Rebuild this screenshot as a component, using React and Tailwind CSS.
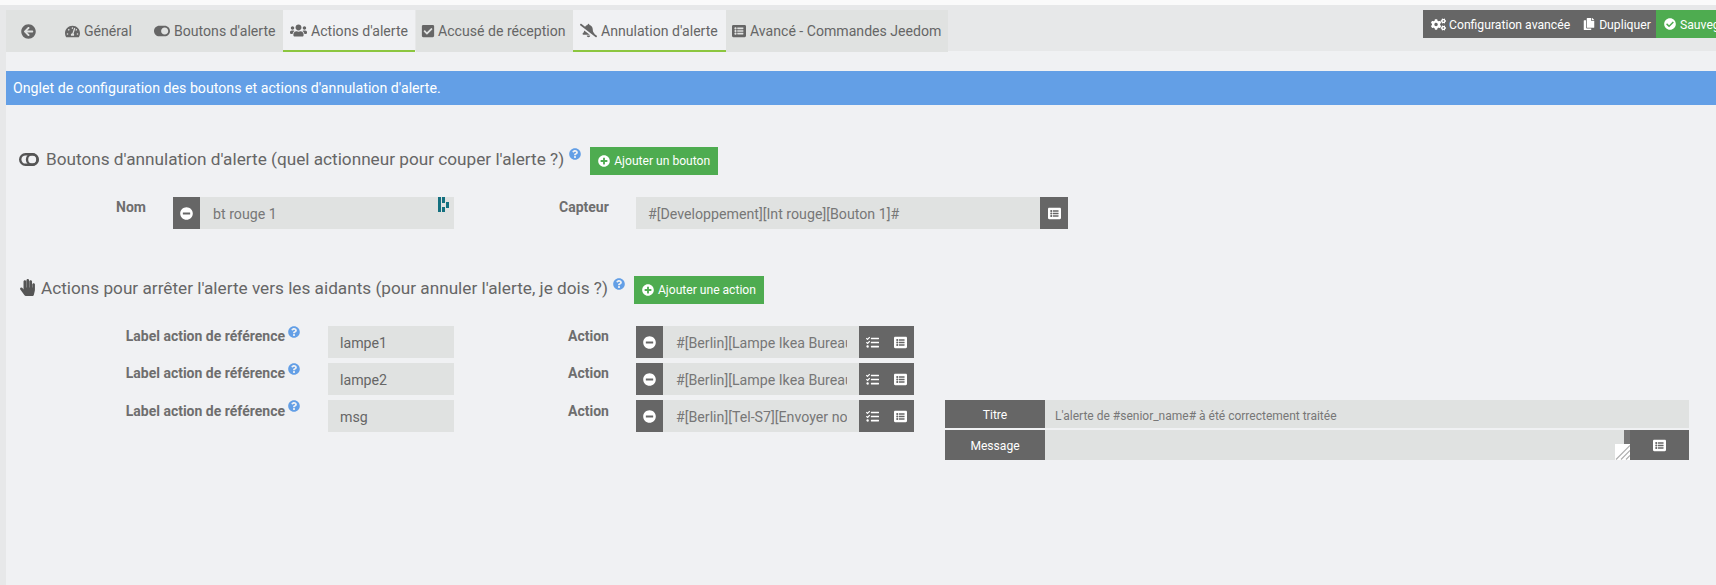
import React from "react";
import {
  FaArrowCircleLeft, FaTachometerAlt, FaToggleOn, FaUsers, FaCheckSquare, FaBellSlash, FaListAlt, FaCogs, FaCopy,
  FaCheckCircle, FaPlusCircle, FaMinusCircle, FaQuestionCircle, FaHandPaper, FaTasks,
} from "react-icons/fa";

function Tab({ icon: Icon, label, active, w, pl, gap, size = 15 }) {
  return (
    <div
      className={
        "flex h-[42px] shrink-0 items-center text-[14.1px] text-[#666] " +
        (active ? "bg-[#f0f1f3] border-b-2 border-[#8cc63f]" : "bg-[#e0e2e1]")
      }
      style={{ width: w, paddingLeft: pl, gap }}
    >
      <Icon size={size} className="shrink-0" />
      {label && <span className={"whitespace-nowrap " + (active ? "pt-[4px]" : "pt-[2px]")}>{label}</span>}
    </div>
  );
}

function Help({ className = "" }) {
  return <FaQuestionCircle size={12} className={"shrink-0 text-[#639fe6] " + className} />;
}

function AddBtn({ label, w }) {
  return (
    <div className="flex h-7 shrink-0 items-center justify-center gap-[4px] bg-[#4eac50] text-[12.1px] text-white" style={{ width: w }}>
      <FaPlusCircle size={12} />
      <span className="whitespace-nowrap pt-[1px]">{label}</span>
    </div>
  );
}

function Field({ value, w, pl = 12, color = "text-[#777]" }) {
  return (
    <div
      className={"flex h-8 items-center overflow-hidden whitespace-nowrap bg-[#e0e2e1] pt-[3px] text-[14.2px] " + color}
      style={{ width: w, paddingLeft: pl }}
    >
      {value}
    </div>
  );
}

function DarkCell({ w, h = 32, children, className = "" }) {
  return (
    <div className={"flex shrink-0 items-center justify-center bg-[#666] text-white " + className} style={{ width: w, height: h }}>
      {children}
    </div>
  );
}

function ActionRow({ label, value, right, labelPad = "" }) {
  return (
    <div className="flex items-start">
      <div className="flex w-[322px] shrink-0 justify-end pr-[28px] text-[14px] font-bold text-[#6e6e6e]">
        <div className="flex items-start gap-[3px]">
          <span className={"whitespace-nowrap " + labelPad}>Label action de référence</span>
          <Help />
        </div>
      </div>
      <Field value={label} w={126} color="text-[#666]" />
      <div className="w-[182px] shrink-0 pl-[114px] text-[14px] font-bold text-[#6e6e6e]">
        <span className={"block " + labelPad}>Action</span>
      </div>
      <DarkCell w={27}><FaMinusCircle size={13} /></DarkCell>
      <div className="flex h-8 w-[196px] items-center bg-[#e0e2e1] pl-[13px] pr-[12px] pt-[3px] text-[14.2px] text-[#777]">
        <span className="block overflow-hidden whitespace-nowrap">{value}</span>
      </div>
      <DarkCell w={55} className="gap-[15px]">
        <FaTasks size={13} />
        <FaListAlt size={13} />
      </DarkCell>
      {right}
    </div>
  );
}

export default function App() {
  return (
    <div className="h-[585px] overflow-hidden bg-[#fafafa] pt-[5px] text-[#666] [font-family:Roboto,sans-serif]">
      <div className="h-[580px] bg-[#e7e8e9] pl-[6px]">
        <div className="flex h-[46px] items-start justify-between pt-[5px]">
          <div className="relative z-10 flex">
            <Tab icon={FaArrowCircleLeft} w={55} pl={15} />
            <Tab icon={FaTachometerAlt} label="Général" w={84} pl={4} gap={4} />
            <Tab icon={FaToggleOn} label="Boutons d'alerte" w={138} pl={9} gap={4} size={16} />
            <Tab icon={FaUsers} label="Actions d'alerte" active w={132} pl={7} gap={4} size={17} />
            <div className="w-px" />
            <Tab icon={FaCheckSquare} label="Accusé de réception" w={157} pl={5} gap={3} size={14} />
            <Tab icon={FaBellSlash} label="Annulation d'alerte" active w={153} pl={7} gap={4} size={17} />
            <Tab icon={FaListAlt} label="Avancé - Commandes Jeedom" w={222} pl={6} gap={4} size={14} />
          </div>
          <div className="flex h-7 w-[293px] shrink-0 overflow-hidden text-[12.2px] text-white">
            <div className="flex w-[233px] shrink-0 items-center bg-[#666] pl-[8px]">
              <FaCogs size={15} className="mr-[3px]" />
              <span className="whitespace-nowrap pt-[3px]">Configuration avancée</span>
              <FaCopy size={12} className="ml-[13px] mr-[4px]" />
              <span className="pt-[3px]">Dupliquer</span>
            </div>
            <div className="flex w-[120px] shrink-0 items-center gap-[4px] bg-[#4eac50] pl-[8px]">
              <FaCheckCircle size={12} />
              <span className="whitespace-nowrap pt-[3px]">Sauvegarder</span>
            </div>
          </div>
        </div>

        <div className="h-[534px] bg-[#f0f1f3]">
          <div className="pt-[20px]">
            <div className="flex h-[34px] items-center bg-[#639fe6] pl-[7px] pt-[1px] text-[14.2px] text-white">
              Onglet de configuration des boutons et actions d'annulation d'alerte.
            </div>
          </div>

          <div className="mt-[42px] flex h-7 items-start pl-[13px]">
            <svg className="mr-[7px] mt-[6px] shrink-0" width="20" height="13" viewBox="0 0 20 13" fill="none" stroke="#555">
              <rect x="1.2" y="1.2" width="17.6" height="10.6" rx="5.3" strokeWidth="2.4" />
              <circle cx="13.2" cy="6.5" r="5.2" strokeWidth="2.4" />
            </svg>
            <span className="whitespace-nowrap text-[17.2px] text-[#666]">Boutons d'annulation d'alerte (quel actionneur pour couper l'alerte ?)</span>
            <Help className="ml-[5px] mt-[1px]" />
            <div className="ml-[9px]"><AddBtn label="Ajouter un bouton" w={128} /></div>
          </div>

          <div className="mt-[22px] flex items-start">
            <div className="w-[167px] shrink-0 pl-[110px] text-[14px] font-bold text-[#6e6e6e]">Nom</div>
            <DarkCell w={27}><FaMinusCircle size={13} /></DarkCell>
            <div className="relative">
              <Field value="bt rouge 1" w={254} pl={13} />
              <svg className="absolute right-[5px] top-0" width="11" height="15" viewBox="0 0 11 15">
                <path d="M0 0h3v15H0zM4 0h3v6H4zM4 10h3v5H4zM8 5h3v6H8z" fill="#14707f" />
              </svg>
            </div>
            <div className="w-[182px] shrink-0 pl-[105px] text-[14px] font-bold text-[#6e6e6e]">Capteur</div>
            <Field value="#[Developpement][Int rouge][Bouton 1]#" w={404} pl={12} />
            <DarkCell w={28}><FaListAlt size={13} /></DarkCell>
          </div>

          <div className="mt-[47px] flex h-7 items-start pl-[13px]">
            <FaHandPaper size={17} className="mr-[5px] mt-[3px] shrink-0 text-[#555]" />
            <span className="whitespace-nowrap text-[17.2px] text-[#666]">Actions pour arrêter l'alerte vers les aidants (pour annuler l'alerte, je dois ?)</span>
            <Help className="ml-[5px] mt-[2px]" />
            <div className="ml-[9px]"><AddBtn label="Ajouter une action" w={130} /></div>
          </div>

          <div className="mt-[22px] flex flex-col gap-[5px]">
            <ActionRow label="lampe1" value="#[Berlin][Lampe Ikea Bureau][Allumer]" />
            <ActionRow label="lampe2" value="#[Berlin][Lampe Ikea Bureau][Eteindre]" />
            <ActionRow
              label="msg"
              labelPad="pt-[1px]"
              value="#[Berlin][Tel-S7][Envoyer notification]"
              right={
                <div className="ml-[31px] flex w-[744px] shrink-0 flex-col gap-[2px]">
                  <div className="flex h-7">
                    <DarkCell w={100} h={28} className="pt-[3px] text-[12.1px]">Titre</DarkCell>
                    <div className="flex flex-1 items-center overflow-hidden whitespace-nowrap bg-[#e0e2e1] pl-[10px] pt-[3px] text-[12px] text-[#777]">
                      L'alerte de #senior_name# à été correctement traitée
                    </div>
                  </div>
                  <div className="relative flex h-[30px]">
                    <DarkCell w={100} h={30} className="pt-[3px] text-[12.1px]">Message</DarkCell>
                    <div className="flex-1 bg-[#e0e2e1]" />
                    <DarkCell w={59} h={30}><FaListAlt size={13} /></DarkCell>
                    <div className="absolute right-[59px] top-0 h-[14px] w-[6px] bg-[#777]" />
                    <svg className="absolute bottom-0 right-[59px]" width="15" height="16" viewBox="0 0 15 16">
                      <rect width="15" height="16" fill="#fff" />
                      <path d="M1 15.5L15 1.5M6 15.5L15 6.5M11 15.5L15 11.5" stroke="#b0b0b0" strokeWidth="1.2" fill="none" />
                    </svg>
                  </div>
                </div>
              }
            />
          </div>
        </div>
      </div>
    </div>
  );
}
